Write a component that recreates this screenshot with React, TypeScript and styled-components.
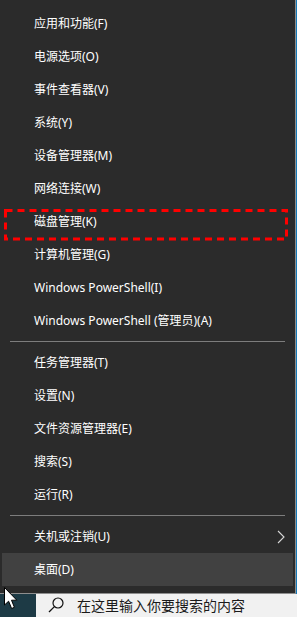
import React from "react";
import styled, { createGlobalStyle } from "styled-components";

const GlobalStyle = createGlobalStyle`
  html, body {
    margin: 0;
    padding: 0;
    background: #1479b8;
    overflow: hidden;
  }
  * { box-sizing: border-box; }
`;

const Screen = styled.div`
  position: relative;
  width: 297px;
  height: 617px;
  display: flex;
  flex-direction: column;
  overflow: hidden;
  background: #1479b8;
  font-family: "Noto Sans", "Noto Sans CJK SC", sans-serif;
`;

const Menu = styled.div`
  position: relative;
  flex: none;
  width: 296px;
  height: 594px;
  background: #2b2b2b;
  border-right: 1px solid #8e8e8e;
  border-bottom: 1px solid #8e8e8e;
  padding: 7px 2px 6px 2px;
  display: flex;
  flex-direction: column;
`;

const Item = styled.div<{ $active?: boolean }>`
  flex: none;
  height: 33px;
  display: flex;
  align-items: center;
  justify-content: space-between;
  padding: 0 8px 0 32px;
  background: ${(p) => (p.$active ? "#414141" : "transparent")};
  color: #ffffff;
  font-size: 12px;
  white-space: nowrap;
`;

const Label = styled.span`
  line-height: 1;
`;

const Separator = styled.div`
  flex: none;
  height: 1px;
  margin: 4px 8px;
  background: #7d7d7d;
`;

const Chevron = styled.svg`
  width: 8px;
  height: 14px;
  display: block;
`;

const Highlight = styled.svg`
  position: absolute;
  left: 0;
  top: 0;
  width: 296px;
  height: 594px;
  pointer-events: none;
`;

const Taskbar = styled.div`
  flex: 1;
  display: flex;
  align-items: stretch;
`;

const StartButton = styled.div`
  flex: none;
  width: 36px;
  background: #1d3a45;
`;

const SearchBox = styled.div`
  flex: 1;
  display: flex;
  align-items: flex-start;
  gap: 13px;
  padding: 2px 0 0 12px;
  background: #f1f1f1;
  overflow: hidden;
`;

const SearchIcon = styled.svg`
  flex: none;
  width: 16px;
  height: 16px;
  display: block;
  margin-top: 1px;
`;

const SearchText = styled.span`
  font-family: "Noto Sans CJK SC", sans-serif;
  font-size: 14px;
  line-height: 18px;
  color: #1a1a1a;
  white-space: nowrap;
`;

const Cursor = styled.svg`
  position: absolute;
  left: 4px;
  top: 587px;
  width: 16px;
  height: 23px;
  pointer-events: none;
`;

const groups: string[][] = [
  [
    "应用和功能(F)",
    "电源选项(O)",
    "事件查看器(V)",
    "系统(Y)",
    "设备管理器(M)",
    "网络连接(W)",
    "磁盘管理(K)",
    "计算机管理(G)",
    "Windows PowerShell(I)",
    "Windows PowerShell (管理员)(A)",
  ],
  ["任务管理器(T)", "设置(N)", "文件资源管理器(E)", "搜索(S)", "运行(R)"],
];

export default function App() {
  return (
    <>
      <GlobalStyle />
      <Screen>
        <Menu>
          {groups.map((g, gi) => (
            <React.Fragment key={gi}>
              {g.map((t) => (
                <Item key={t}>
                  <Label>{t}</Label>
                </Item>
              ))}
              <Separator />
            </React.Fragment>
          ))}
          <Item>
            <Label>关机或注销(U)</Label>
            <Chevron viewBox="0 0 8 14">
              <polyline
                points="1,1 7,7 1,13"
                fill="none"
                stroke="#d8d8d8"
                strokeWidth="1.1"
              />
            </Chevron>
          </Item>
          <Item $active>
            <Label>桌面(D)</Label>
          </Item>
          <Highlight viewBox="0 0 296 594">
            <rect
              x="5.5"
              y="210.5"
              width="281"
              height="28.5"
              fill="none"
              stroke="#ff0000"
              strokeWidth="3"
              strokeDasharray="7 5"
            />
          </Highlight>
        </Menu>
        <Taskbar>
          <StartButton />
          <SearchBox>
            <SearchIcon viewBox="0 0 16 16">
              <circle cx="10" cy="6" r="5" fill="none" stroke="#111" strokeWidth="1.2" />
              <line x1="6.4" y1="9.6" x2="1" y2="15" stroke="#111" strokeWidth="1.3" />
            </SearchIcon>
            <SearchText>在这里输入你要搜索的内容</SearchText>
          </SearchBox>
        </Taskbar>
        <Cursor viewBox="0 0 16 23">
          <path
            d="M0.5 0.5 L0.5 18 L4.6 14.2 L7.6 21.5 L10.4 20.3 L7.5 13.2 L12.8 13.2 Z"
            fill="#ffffff"
            stroke="#000000"
            strokeWidth="1"
            strokeLinejoin="miter"
          />
        </Cursor>
      </Screen>
    </>
  );
}
